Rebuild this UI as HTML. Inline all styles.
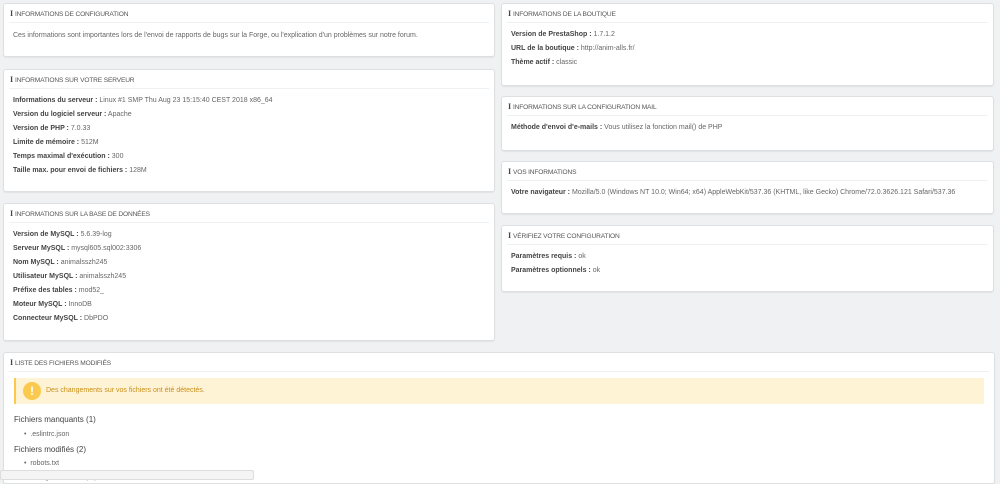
<!DOCTYPE html>
<html><head><style>
body{margin:0;background:#eff1f2;font-family:"Liberation Sans",sans-serif;font-size:7px;color:#555;width:1000px;height:476px;overflow:hidden;position:relative}
.p{position:absolute;background:#fff;border:1px solid #dde0e3;border-radius:3px;box-shadow:0 1px 1px rgba(0,0,0,.06)}
.h{height:18px;line-height:19px;margin:0 5px;border-bottom:1px solid #eef0f2;font-size:6.6px;letter-spacing:-0.15px;color:#555;padding-left:1px;text-transform:uppercase}
.h b{font-family:"Liberation Serif",serif;color:#444;margin-right:2px;font-size:8px}
.c{padding:5px 9px 0}
.r{height:14px;line-height:14px;color:#666;white-space:nowrap}
.r b{color:#444}
</style></head><body>
<div class="p" style="left:3px;top:3px;width:490px;height:52px"><div class="h"><b>i</b>Informations de configuration</div><div class="c" style="padding-top:6px"><div class="r">Ces informations sont importantes lors de l'envoi de rapports de bugs sur la Forge, ou l'explication d'un problèmes sur notre forum.</div></div></div>
<div class="p" style="left:3px;top:69px;width:490px;height:121px"><div class="h"><b>i</b>Informations sur votre serveur</div><div class="c">
<div class="r"><b>Informations du serveur :</b> Linux #1 SMP Thu Aug 23 15:15:40 CEST 2018 x86_64</div>
<div class="r"><b>Version du logiciel serveur :</b> Apache</div>
<div class="r"><b>Version de PHP :</b> 7.0.33</div>
<div class="r"><b>Limite de mémoire :</b> 512M</div>
<div class="r"><b>Temps maximal d'exécution :</b> 300</div>
<div class="r"><b>Taille max. pour envoi de fichiers :</b> 128M</div></div></div>
<div class="p" style="left:3px;top:203px;width:490px;height:136px"><div class="h"><b>i</b>Informations sur la base de données</div><div class="c">
<div class="r"><b>Version de MySQL :</b> 5.6.39-log</div>
<div class="r"><b>Serveur MySQL :</b> mysql605.sql002:3306</div>
<div class="r"><b>Nom MySQL :</b> animalsszh245</div>
<div class="r"><b>Utilisateur MySQL :</b> animalsszh245</div>
<div class="r"><b>Préfixe des tables :</b> mod52_</div>
<div class="r"><b>Moteur MySQL :</b> InnoDB</div>
<div class="r"><b>Connecteur MySQL :</b> DbPDO</div></div></div>
<div class="p" style="left:501px;top:3px;width:491px;height:81px"><div class="h"><b>i</b>Informations de la boutique</div><div class="c">
<div class="r"><b>Version de PrestaShop :</b> 1.7.1.2</div>
<div class="r"><b>URL de la boutique :</b> http://anim-alls.fr/</div>
<div class="r"><b>Thème actif :</b> classic</div></div></div>
<div class="p" style="left:501px;top:96px;width:491px;height:53px"><div class="h"><b>i</b>Informations sur la configuration mail</div><div class="c">
<div class="r"><b>Méthode d'envoi d'e-mails :</b> Vous utilisez la fonction mail() de PHP</div></div></div>
<div class="p" style="left:501px;top:161px;width:491px;height:51px"><div class="h"><b>i</b>Vos informations</div><div class="c">
<div class="r"><b>Votre navigateur :</b> Mozilla/5.0 (Windows NT 10.0; Win64; x64) AppleWebKit/537.36 (KHTML, like Gecko) Chrome/72.0.3626.121 Safari/537.36</div></div></div>
<div class="p" style="left:501px;top:225px;width:491px;height:65px"><div class="h"><b>i</b>Vérifiez votre configuration</div><div class="c">
<div class="r"><b>Paramètres requis :</b> ok</div>
<div class="r"><b>Paramètres optionnels :</b> ok</div></div></div>
<div class="p" style="left:3px;top:352px;width:990px;height:130px"><div class="h"><b>i</b>Liste des fichiers modifiés</div>
<div style="position:absolute;left:10px;top:25px;width:968px;height:26px;background:#fff3d6;border-left:2px solid #fcc94f;color:#c98f16;line-height:26px"><span style="position:absolute;left:7px;top:4px;width:18px;height:18px;border-radius:50%;background:#fcc94f;color:#fff;font-weight:bold;font-size:12px;text-align:center;line-height:18px">!</span><span style="margin-left:30px">Des changements sur vos fichiers ont été détectés.</span></div>
<div style="position:absolute;left:10px;top:60px;font-size:8px;color:#444;line-height:14px">Fichiers manquants (1)<br><span style="font-size:7px;color:#666;padding-left:10px">• &nbsp;.eslintrc.json</span><div style="height:14px;line-height:16px">Fichiers modifiés (2)</div><span style="font-size:7px;color:#666;padding-left:10px;line-height:12px">• &nbsp;robots.txt</span><br><span style="font-size:7px;color:#666;padding-left:10px;line-height:10px">• &nbsp;config/defines.inc.php</span></div></div>
<div style="position:absolute;left:0;top:470px;width:252px;height:8px;background:#f4f4f4;border:1px solid #ddd;border-radius:2px"></div>
</body></html>
